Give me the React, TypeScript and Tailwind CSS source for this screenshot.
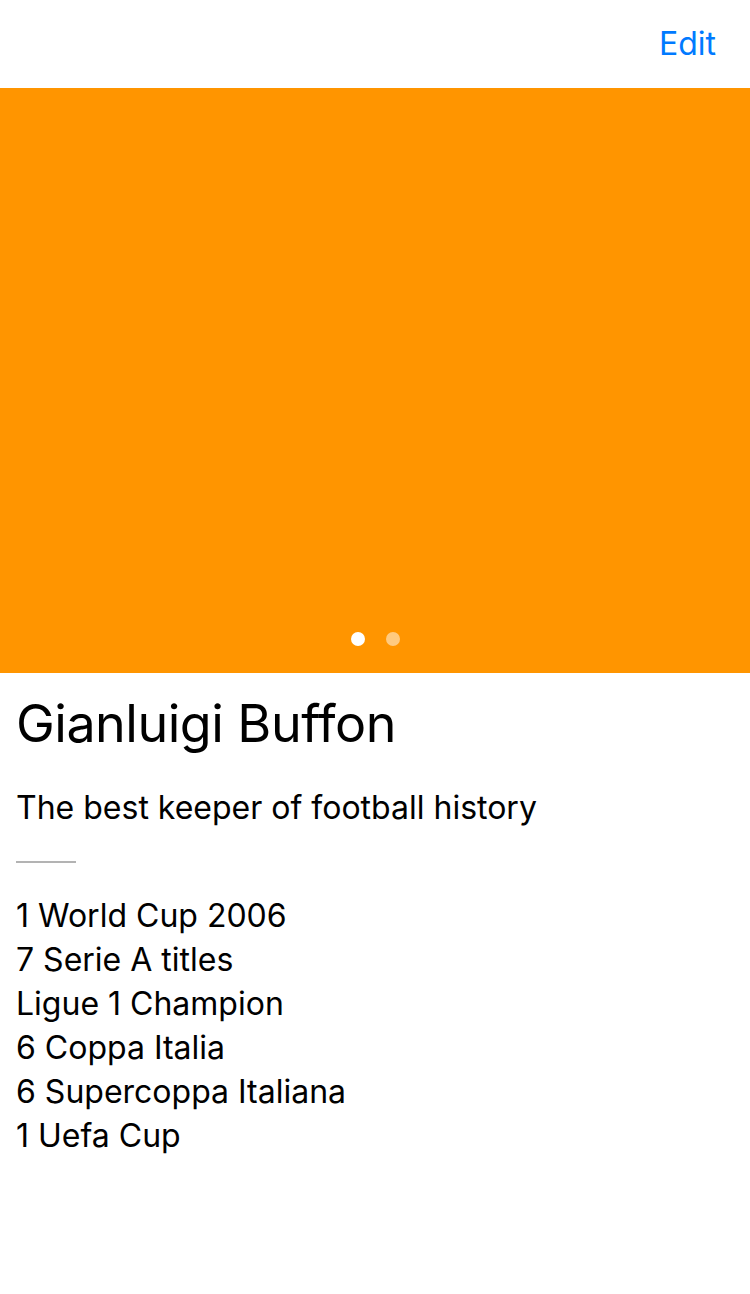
const titles = [
  "1 World Cup 2006",
  "7 Serie A titles",
  "Ligue 1 Champion",
  "6 Coppa Italia",
  "6 Supercoppa Italiana",
  "1 Uefa Cup",
];

export default function App() {
  return (
    <div className="min-h-screen bg-white font-['Inter',sans-serif] text-black">
      {/* nav bar */}
      <div className="flex h-[88px] items-center justify-end px-[34px]">
        <button className="text-[32px] leading-none text-[#007aff]">Edit</button>
      </div>

      {/* photo pager */}
      <div className="flex h-[585px] items-end justify-center bg-[#ff9500] pb-[27px]">
        <div className="flex items-center gap-[21px]">
          <span className="h-[14px] w-[14px] rounded-full bg-white" />
          <span className="h-[14px] w-[14px] rounded-full bg-white/50" />
        </div>
      </div>

      <div className="px-[16px]">
        <h1 className="mt-[20px] text-[52px] leading-[62px] tracking-[-0.5px]">Gianluigi Buffon</h1>
        <p className="mt-[33px] text-[32px] leading-[40px]">The best keeper of football history</p>
        <div className="mt-[33px] h-[2px] w-[60px] bg-[#b3b3b3]" />
        <ul className="mt-[31px]">
          {titles.map((t) => (
            <li key={t} className="text-[32px] leading-[44px]">
              {t}
            </li>
          ))}
        </ul>
      </div>
    </div>
  );
}
